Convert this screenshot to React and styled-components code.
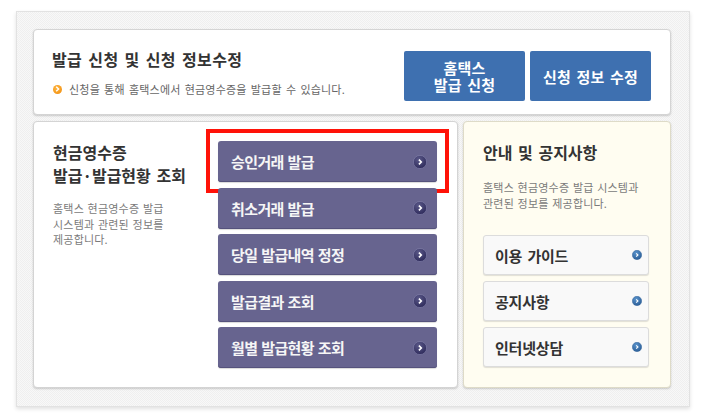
import React from 'react';
import styled, { createGlobalStyle } from 'styled-components';

const GlobalStyle = createGlobalStyle`
  html, body {
    margin: 0;
    padding: 0;
    background: #fff;
  }
  body {
    font-family: "Noto Sans CJK KR", "Noto Sans", sans-serif;
  }
`;

const Page = styled.div`
  padding: 11px 19px 12px 16px;
`;

const Frame = styled.div`
  width: 674px;
  height: 396px;
  box-sizing: border-box;
  border: 1px solid #e2e2e2;
  background-color: #f4f4f4;
  background-image: repeating-conic-gradient(#efefef 0 25%, #f8f8f8 0 50%);
  background-size: 2px 2px;
  box-shadow: 0 2px 4px rgba(0, 0, 0, 0.12);
  padding: 17px 18px 18px 16px;
  display: flex;
  flex-direction: column;
  gap: 6px;
`;

const Card = styled.div`
  box-sizing: border-box;
  background: ${({ tone }) => (tone === 'cream' ? '#fffdf1' : '#fff')};
  border: 1px solid ${({ tone }) => (tone === 'cream' ? '#dedbc8' : '#d4d4d4')};
  border-radius: 4px;
  box-shadow: 0 1px 2px rgba(0, 0, 0, 0.18);
`;

const TopCard = styled(Card)`
  height: 86px;
  display: flex;
  align-items: flex-start;
  justify-content: space-between;
  padding: 20px 19px 0 18px;
`;

const Title = styled.h2`
  margin: 0;
  font-size: 16px;
  line-height: ${({ lh }) => lh || '18px'};
  font-weight: 700;
  color: #333;
  letter-spacing: ${({ ls }) => ls || '0'};
  word-spacing: 2px;
`;

const Notice = styled.p`
  margin: 13px 0 0 1px;
  display: flex;
  align-items: center;
  gap: 7px;
  font-size: 11px;
  line-height: 16px;
  color: #666;
  letter-spacing: 0.2px;
  word-spacing: 1.5px;
`;

const Bullet = styled.span`
  width: 9px;
  height: 9px;
  border-radius: 50%;
  background: radial-gradient(circle at 40% 35%, #ffb640, #ef8a0a);
  display: inline-flex;
  align-items: center;
  justify-content: center;
  flex: none;
`;

const TopButtons = styled.div`
  display: flex;
  gap: 5px;
  margin-top: 1px;
`;

const BlueButton = styled.button`
  width: 121px;
  height: 50px;
  border: none;
  border-radius: 2px;
  background: #3e70b0;
  color: #fff;
  font-family: inherit;
  font-size: 15px;
  font-weight: 700;
  line-height: 17px;
  letter-spacing: 0.2px;
  word-spacing: 2px;
  padding: 0;
  display: flex;
  flex-direction: column;
  align-items: center;
  justify-content: center;
  cursor: pointer;
`;

const Line = styled.span`
  display: block;
`;

const Lower = styled.div`
  display: flex;
  gap: 5px;
  height: 267px;
`;

const MenuCard = styled(Card)`
  width: 425px;
  display: flex;
  justify-content: space-between;
  padding: 19px 20px 0 19px;
`;

const InfoCard = styled(Card)`
  flex: 1;
  padding: 19px 21px 0 19px;
  display: flex;
  flex-direction: column;
`;

const Desc = styled.p`
  margin: ${({ mt }) => mt || '14px'} 0 0;
  font-size: 11px;
  line-height: 15.5px;
  color: #7a7a7a;
  letter-spacing: 0.2px;
  word-spacing: 1px;
`;

const ButtonColumn = styled.div`
  width: 219px;
  display: flex;
  flex-direction: column;
  gap: 5.5px;
`;

const PurpleButton = styled.button`
  position: relative;
  height: 41px;
  box-sizing: border-box;
  border: none;
  border-radius: 3px;
  background: #67648f;
  box-shadow: inset 0 -1px 0 #55527c, 0 1px 1px rgba(0, 0, 0, 0.15);
  color: #f6f6f6;
  font-family: inherit;
  font-size: 15px;
  font-weight: 700;
  letter-spacing: -0.6px;
  word-spacing: 1px;
  display: flex;
  align-items: center;
  justify-content: space-between;
  padding: 0 10px 0 13px;
  cursor: pointer;
`;

const Highlight = styled.span`
  position: absolute;
  top: -12px;
  left: -12px;
  right: -12px;
  bottom: -11px;
  border: 4px solid #ff1208;
  pointer-events: none;
`;

const GreyButton = styled.button`
  height: 40px;
  box-sizing: border-box;
  border: 1px solid #dcdcdc;
  border-radius: 3px;
  background: #f9f9f9;
  box-shadow: 0 1px 1px rgba(0, 0, 0, 0.12);
  color: #333;
  font-family: inherit;
  font-size: 15px;
  font-weight: 700;
  letter-spacing: -0.2px;
  word-spacing: 2px;
  display: flex;
  align-items: center;
  justify-content: space-between;
  padding: 0 6px 0 11px;
  cursor: pointer;
`;

const InfoButtons = styled.div`
  margin-top: auto;
  margin-bottom: 20px;
  display: flex;
  flex-direction: column;
  gap: 6px;
`;

const Arrow = ({ size, bg, line }) => (
  <svg width={size} height={size} viewBox="0 0 14 14">
    <defs>
      <radialGradient id={`g-${bg}`} cx="40%" cy="30%" r="70%">
        <stop offset="0%" stopColor={bg[0]} />
        <stop offset="100%" stopColor={bg[1]} />
      </radialGradient>
    </defs>
    <circle cx="7" cy="7" r="6.6" fill={`url(#g-${bg})`} stroke={line} strokeWidth="0.6" />
    <path d="M5.9 4.6 L8.3 7 L5.9 9.4" fill="none" stroke="#fff" strokeWidth="1.6" />
  </svg>
);

const menu = ['승인거래 발급', '취소거래 발급', '당일 발급내역 정정', '발급결과 조회', '월별 발급현황 조회'];
const info = ['이용 가이드', '공지사항', '인터넷상담'];

export default function App() {
  return (
    <>
      <GlobalStyle />
      <Page>
        <Frame>
          <TopCard>
            <div>
              <Title ls="0.4px">발급 신청 및 신청 정보수정</Title>
              <Notice>
                <Bullet>
                  <svg width="5" height="6" viewBox="0 0 5 6">
                    <path d="M1.2 0.8 L3.6 3 L1.2 5.2" fill="none" stroke="#fff" strokeWidth="1.4" />
                  </svg>
                </Bullet>
                신청을 통해 홈택스에서 현금영수증을 발급할 수 있습니다.
              </Notice>
            </div>
            <TopButtons>
              <BlueButton>
                <Line>홈택스</Line>
                <Line>발급 신청</Line>
              </BlueButton>
              <BlueButton>신청 정보 수정</BlueButton>
            </TopButtons>
          </TopCard>
          <Lower>
            <MenuCard>
              <div>
                <Title lh="23px">
                  현금영수증
                  <br />
                  발급·발급현황 조회
                </Title>
                <Desc>
                  홈택스 현금영수증 발급
                  <br />
                  시스템과 관련된 정보를
                  <br />
                  제공합니다.
                </Desc>
              </div>
              <ButtonColumn>
                {menu.map((label, i) => (
                  <PurpleButton key={label}>
                    {label}
                    <Arrow size={14} bg={['#5a5888', '#2f2c5c']} line="#8583ad" />
                    {i === 0 && <Highlight />}
                  </PurpleButton>
                ))}
              </ButtonColumn>
            </MenuCard>
            <InfoCard tone="cream">
              <Title lh="22px">안내 및 공지사항</Title>
              <Desc mt="17px">
                홈택스 현금영수증 발급 시스템과
                <br />
                관련된 정보를 제공합니다.
              </Desc>
              <InfoButtons>
                {info.map((label) => (
                  <GreyButton key={label}>
                    {label}
                    <Arrow size={10} bg={['#5a93cc', '#2c5f98']} line="#2c5f98" />
                  </GreyButton>
                ))}
              </InfoButtons>
            </InfoCard>
          </Lower>
        </Frame>
      </Page>
    </>
  );
}
